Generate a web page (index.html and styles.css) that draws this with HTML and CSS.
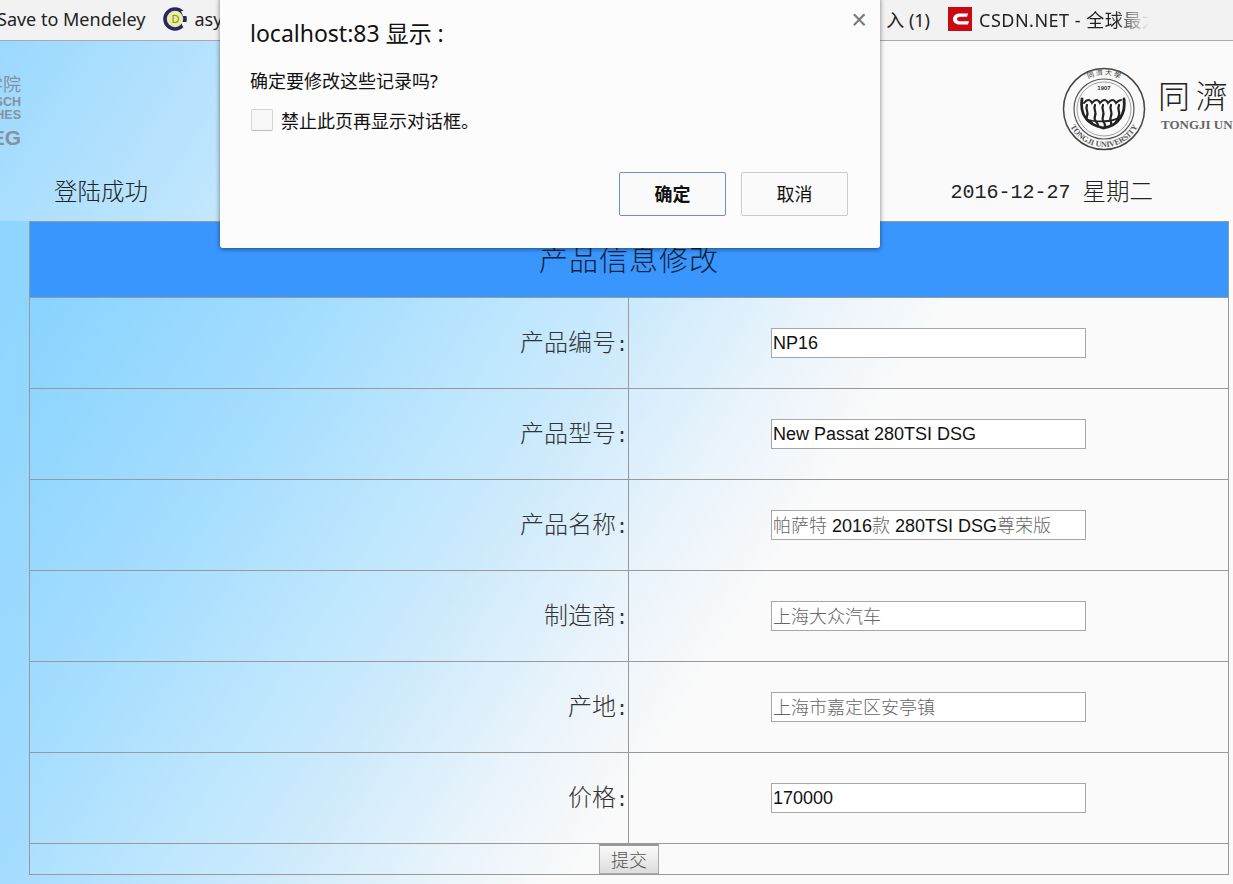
FILE: index.html
```html
<!DOCTYPE html>
<html lang="zh-CN">
	<head>
		<meta charset="UTF-8" />
		<title>产品信息修改</title>
		<link rel="stylesheet" href="styles.css">
	</head>
	<body>
		<div class="bookmarks">
			<div class="bm-group">
				<span class="bm bm-first">Save to Mendeley</span>
				<span class="bm">
					<svg class="bm-icon" viewBox="0 0 24 24">
						<circle cx="12" cy="12" r="10" fill="#e8f0a0" stroke="#2b2468" stroke-width="3.600" />
						<path d="M18 4h6v5h-4z" fill="#f2f2f2" />
						<path d="M18 15h6v5h-4z" fill="#f2f2f2" />
						<text x="8.500" y="16" class="bm-d">D</text>
					</svg>
					asy
				</span>
			</div>
			<div class="bm-group">
				<span class="bm">入 (1)</span>
				<span class="bm">
					<svg class="bm-icon" viewBox="0 0 24 24">
						<rect width="24" height="24" fill="#c90a12" />
						<path d="M20 6.500H11.500C7.500 6.500 5 9 5 12s2.500 5.500 6.500 5.500H20l1-3.200h-9c-1.700 0-3-1-3-2.300s1.300-2.300 3-2.300h7z" fill="#fff" />
					</svg>
					<span class="bm-fade">CSDN.NET - 全球最大</span>
				</span>
			</div>
		</div>

		<div class="header">
			<div class="logos">
				<div class="logo-left">
					<span class="ll-cn">中德学院</span>
					<span class="ll-en">DEUTSCH</span>
					<span class="ll-en">CHINESISCHES</span>
					<span class="ll-big">KOLLEG</span>
				</div>
				<div class="logo-right">
					<svg class="seal" viewBox="0 0 84 84">
						<defs>
							<path id="seal-top" d="M8 42a34 34 0 0 1 68 0" />
							<path id="seal-bottom" d="M4 42a38 38 0 0 0 76 0" />
						</defs>
						<circle cx="42" cy="42" r="40.500" fill="none" stroke="#444" stroke-width="1.500" />
						<circle cx="42" cy="42" r="30" fill="none" stroke="#555" stroke-width="1.200" />
						<circle cx="42" cy="42" r="27" fill="none" stroke="#888" stroke-width="0.800" />
						<text class="seal-cn"><textPath href="#seal-top" startOffset="50%" text-anchor="middle">同 濟 大 學</textPath></text>
						<text class="seal-en"><textPath href="#seal-bottom" startOffset="50%" text-anchor="middle">TONGJI UNIVERSITY</textPath></text>
						<text x="42" y="23" class="seal-year">1907</text>
						<g fill="none" stroke="#222" stroke-linecap="round">
							<path d="M20 32C18 45 23 57 41 61 57 59 64 46 62 32" stroke-width="2.800" />
							<path d="M22 36c3-4 6-4 8 0 3-4 6-4 8 0 3-4 6-4 8 0 3-4 6-4 8 0 2-2 4-3 5-3" stroke-width="2" />
							<path d="M25 38c-2 5 2 6 0 11s2 5 5 7" stroke-width="2.200" />
							<path d="M33 38c-2 5 2 6 0 11s2 5 3 9" stroke-width="2.200" />
							<path d="M41 38c-2 5 2 6 0 11s2 5 2 10" stroke-width="2.200" />
							<path d="M49 38c-2 5 2 6 0 11s1 5 0 8" stroke-width="2.200" />
							<path d="M57 38c-2 5 1 6 0 10s-1 4-3 7" stroke-width="2.200" />
							<path d="M24 52c6 3 26 4 34-2" stroke-width="1.800" />
						</g>
					</svg>
					<div class="tj-name">
						<span class="tj-cn">同濟</span>
						<span class="tj-en">TONGJI UNIVERSITY</span>
					</div>
				</div>
			</div>
			<div class="status">
				<span>登陆成功</span>
				<span><span class="mono">2016-12-27 </span>星期二</span>
			</div>
		</div>

		<table class="edit">
			<colgroup>
				<col class="col-label" />
				<col />
			</colgroup>
			<tr>
				<td colspan="2" class="title">产品信息修改</td>
			</tr>
			<tr>
				<td class="label">产品编号<span class="colon">:</span></td>
				<td class="value"><input class="field" type="text" value="NP16" /></td>
			</tr>
			<tr>
				<td class="label">产品型号<span class="colon">:</span></td>
				<td class="value"><input class="field" type="text" value="New Passat 280TSI DSG" /></td>
			</tr>
			<tr>
				<td class="label">产品名称<span class="colon">:</span></td>
				<td class="value"><div class="field"><span class="thin">帕萨特</span> 2016<span class="thin">款</span> 280TSI DSG<span class="thin">尊荣版</span></div></td>
			</tr>
			<tr>
				<td class="label">制造商<span class="colon">:</span></td>
				<td class="value"><input class="field thin" type="text" value="上海大众汽车" /></td>
			</tr>
			<tr>
				<td class="label">产地<span class="colon">:</span></td>
				<td class="value"><input class="field thin" type="text" value="上海市嘉定区安亭镇" /></td>
			</tr>
			<tr>
				<td class="label">价格<span class="colon">:</span></td>
				<td class="value"><input class="field" type="text" value="170000" /></td>
			</tr>
			<tr>
				<td colspan="2" class="submit"><button class="btn-submit">提交</button></td>
			</tr>
		</table>

		<div class="dialog">
			<span class="dlg-close">×</span>
			<div class="dlg-title">localhost:83 显示 :</div>
			<div class="dlg-msg">确定要修改这些记录吗?</div>
			<label class="dlg-check"><span class="dlg-box"></span>禁止此页再显示对话框。</label>
			<div class="dlg-btns">
				<button class="dlg-btn dlg-ok">确定</button>
				<button class="dlg-btn">取消</button>
			</div>
		</div>
	</body>
</html>
```

FILE: styles.css
```css
* {
	margin: 0;
	padding: 0;
	box-sizing: border-box;
}
html,
body {
	height: 884px;
	overflow: hidden;
}
body {
	font-family: "Liberation Sans", "Noto Sans CJK SC", sans-serif;
	background: linear-gradient(123deg, #8ed6ff 11%, #a5dcff 32%, #fafafa 62%);
}

/* bookmarks bar */
.bookmarks {
	height: 41px;
	display: flex;
	justify-content: space-between;
	overflow: hidden;
	padding: 0 80px 3px 0;
	background: #f2f2f2;
	border-bottom: 1px solid #aaa;
	font-family: "Noto Sans", "Noto Sans CJK SC", sans-serif;
	font-size: 18px;
	color: #222;
}
.bm-group {
	display: flex;
	align-items: center;
	gap: 18px;
}
.bm {
	display: flex;
	align-items: center;
	gap: 7px;
	white-space: nowrap;
}
.bm-first {
	margin-left: -3px;
}
.bm-icon {
	width: 24px;
	height: 24px;
}
.bm-d {
	font-size: 11px;
	fill: #7a8a20;
}
.bm-fade {
	width: 174px;
	overflow: hidden;
	letter-spacing: 0.5px;
	-webkit-mask-image: linear-gradient(90deg, #000 78%, transparent 98%);
	mask-image: linear-gradient(90deg, #000 78%, transparent 98%);
}

/* page header */
.header {
	height: 180px;
	display: flex;
	flex-direction: column;
	overflow: hidden;
	background: linear-gradient(123deg, #9bd8fe 0, #acdffe 10%, #fafafa 60%);
}
.logos {
	height: 129px;
	display: flex;
	justify-content: space-between;
	align-items: flex-start;
}
.logo-left {
	width: 21px;
	margin-top: 33px;
	display: flex;
	flex-direction: column;
	align-items: flex-end;
	overflow: hidden;
	color: #83929c;
	white-space: nowrap;
}
.ll-cn {
	font-size: 18px;
	line-height: 22px;
}
.ll-en {
	font-size: 12.500px;
	line-height: 13px;
	font-weight: bold;
}
.ll-big {
	font-size: 21px;
	line-height: 26px;
	margin-top: 3px;
	font-weight: bold;
}
.logo-right {
	width: 171px;
	margin-top: 26px;
	display: flex;
	gap: 12px;
	overflow: hidden;
	flex-shrink: 0;
}
.seal {
	width: 84px;
	height: 84px;
	flex-shrink: 0;
}
.seal-cn {
	font-family: "Noto Sans CJK TC", sans-serif;
	font-size: 7px;
	fill: #444;
}
.seal-en {
	font-family: "Liberation Serif", serif;
	font-size: 8px;
	font-weight: bold;
	fill: #555;
}
.seal-year {
	font-family: "Liberation Sans", sans-serif;
	font-size: 6px;
	font-weight: bold;
	text-anchor: middle;
	fill: #333;
}
.tj-name {
	display: flex;
	flex-direction: column;
	padding-top: 7px;
	white-space: nowrap;
}
.tj-cn {
	font-family: "Noto Sans CJK TC", sans-serif;
	font-size: 32px;
	line-height: 40px;
	letter-spacing: 6px;
	font-weight: 300;
	color: #222;
}
.tj-en {
	margin-top: 3px;
	margin-left: 3px;
	font-family: "Liberation Serif", serif;
	font-size: 13px;
	font-weight: bold;
	color: #666;
}
.status {
	flex: 1;
	display: flex;
	justify-content: space-between;
	align-items: center;
	padding: 0 80px 12px 54px;
	font-family: "Noto Sans CJK SC", sans-serif;
	font-size: 23.500px;
	font-weight: 300;
	color: #222;
}
.mono {
	font-family: "Liberation Mono", monospace;
	font-size: 20px;
	white-space: pre;
	vertical-align: 2px;
}

/* form table */
.edit {
	width: 1200px;
	margin-left: 29px;
	table-layout: fixed;
	border-collapse: collapse;
	background: linear-gradient(123deg, #8ad4ff 4%, #a2dcff 20%, #bce6fe 33%, #cdeafc 41%, #e8f3fb 51%, #fafafa 60%);
}
.col-label {
	width: 599px;
}
.edit td {
	border: 1px solid #999;
	height: 91px;
}
.edit .title {
	height: 76px;
	padding-bottom: 4px;
	background: #3a96ff;
	text-align: center;
	font-family: "Noto Sans CJK SC", sans-serif;
	font-size: 29px;
	font-weight: 300;
	letter-spacing: 1px;
	color: #10243c;
}
.edit .label {
	padding-bottom: 6px;
	text-align: right;
	font-family: "Noto Sans CJK SC", sans-serif;
	font-size: 24px;
	font-weight: 300;
	color: #333;
}
.colon {
	font-family: "Liberation Mono", monospace;
	font-size: 20px;
}
.edit .value {
	text-align: center;
}
.field {
	display: inline-block;
	width: 315px;
	height: 30px;
	padding: 0 1px;
	border: 1px solid #a6a6a6;
	background: #fff;
	font-family: "Liberation Sans", "Noto Sans CJK SC", sans-serif;
	font-size: 18px;
	line-height: 26px;
	color: #111;
	text-align: left;
	vertical-align: middle;
	white-space: nowrap;
}
.thin {
	font-family: "Noto Sans CJK SC", sans-serif;
	font-weight: 300;
	color: #666;
}
input.thin {
	padding-bottom: 3px;
}
.edit .submit {
	height: 31px;
	text-align: center;
	line-height: 0;
}
.btn-submit {
	width: 60px;
	height: 30px;
	padding-bottom: 7px;
	border: 1px solid #aaa;
	border-top: 2px solid #999;
	background: linear-gradient(#fafafa, #ddd);
	font-family: "Noto Sans CJK SC", sans-serif;
	font-size: 18px;
	font-weight: 300;
	color: #555;
	vertical-align: middle;
}

/* alert dialog */
.dialog {
	position: absolute;
	left: 220px;
	top: -4px;
	width: 660px;
	height: 252px;
	padding: 18px 32px 0 30px;
	background: #fcfcfc;
	border-radius: 3px;
	box-shadow: 0 1px 5px rgba(0, 0, 0, 0.5);
	font-family: "Noto Sans", "Noto Sans CJK SC", sans-serif;
	color: #111;
}
.dlg-close {
	position: absolute;
	right: 13px;
	top: 9px;
	font-family: "Liberation Sans", sans-serif;
	font-size: 27px;
	line-height: 30px;
	color: #777;
}
.dlg-title {
	font-size: 23px;
	line-height: 38px;
}
.dlg-msg {
	margin-top: 17px;
	font-size: 18px;
	line-height: 25px;
}
.dlg-check {
	margin-top: 14px;
	height: 24px;
	display: flex;
	align-items: center;
	gap: 8px;
	font-size: 18px;
	padding-left: 1px;
}
.dlg-box {
	width: 22px;
	height: 22px;
	border: 1px solid #d4d4d4;
	border-bottom-color: #bbb;
	border-radius: 2px;
	background: #f8f8f8;
}
.dlg-btns {
	margin-top: 40px;
	display: flex;
	justify-content: flex-end;
	gap: 15px;
}
.dlg-btn {
	width: 107px;
	height: 44px;
	padding-bottom: 2px;
	border: 1px solid #ccc;
	border-radius: 2px;
	background: #fafafa;
	font-family: "Noto Sans CJK SC", sans-serif;
	font-size: 18px;
	color: #111;
}
.dlg-ok {
	border-color: #6d8fd0;
	font-weight: bold;
}
```
